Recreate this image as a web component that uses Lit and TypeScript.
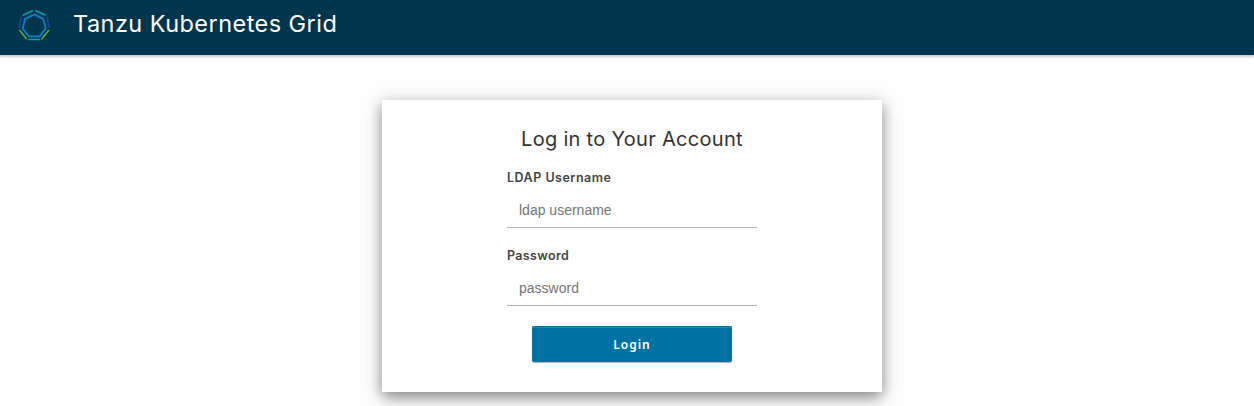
import { LitElement, html, css } from "lit";
import { customElement } from "lit/decorators.js";

@customElement("app-root")
export class AppRoot extends LitElement {
  static styles = css`
    :host { display: block; height: 406px; overflow: hidden; background: #fefefe; font-family: Inter, sans-serif; color: #333; }
    * { box-sizing: border-box; }
    .navbar { display: flex; align-items: flex-start; height: 55px; background: #00364d; box-shadow: 0 2px 2px rgba(0, 0, 0, 0.2); color: #fff; }
    .logo { display: block; width: 40px; height: 40px; margin: 5px 0 0 14px; }
    .brand { margin-left: 19px; font-size: 23.5px; line-height: 47px; letter-spacing: 0.45px; white-space: nowrap; }
    .panel { display: flex; flex-direction: column; align-items: center; width: 500px; height: 292px; margin: 45px 0 0 382px; padding-top: 24px; background: #fff; box-shadow: 0 5px 15px rgba(0, 0, 0, 0.5); }
    .heading { margin: 0; font-size: 20px; line-height: 30px; font-weight: 400; letter-spacing: 0.3px; white-space: nowrap; }
    .row { width: 250px; height: 78px; padding-top: 16px; }
    .label { display: block; height: 16px; font-size: 12.5px; line-height: 16px; font-weight: 600; letter-spacing: 0.5px; color: #444; }
    .label-short { letter-spacing: 0.35px; }
    .input { display: block; width: 250px; height: 35px; margin-top: 7px; padding: 0 12px 1px; border: 0; border-bottom: 1px solid #b3b3b3; border-radius: 0; outline: 0; background: none; font: 14px "Liberation Sans", Arial, sans-serif; color: #666; }
    .input::placeholder { color: #757575; opacity: 1; }
    .button { width: 200px; height: 36px; margin-top: 16px; padding: 0; border: 0; border-radius: 2px; background: #0072a3; box-shadow: inset 0 1px 0 #0072a3, inset 0 2px 0 rgba(255, 255, 255, 0.15), 0 1px 1px rgba(0, 0, 0, 0.3); color: #fff; font: 600 12px "Noto Sans", sans-serif; letter-spacing: 1px; }
  `;

  render() {
    return html`
      <header class="navbar">
        <svg class="logo" viewBox="14 5 40 40" fill="none" stroke-width="1.7">
          <path stroke="#0b80c8" stroke-width="1.8" d="M34.2 14.4 43.3 18.9 45.7 28.5 39.6 36.4H28.8L22.7 28.5 25.1 18.9Z" />
          <path stroke="#009eb5" d="M22.8 15.2 33 10.4M35.4 10.4 45.6 15.2M28.2 39.5H40.2" />
          <path stroke="#10488e" d="M21.4 16.8 19 28M47 16.8 49.4 28" />
          <path stroke="#60a832" d="M19.4 30 26.8 39.2M49 30 41.6 39.2" />
        </svg>
        <div class="brand">Tanzu Kubernetes Grid</div>
      </header>
      <main class="panel">
        <h2 class="heading">Log in to Your Account</h2>
        <div class="row">
          <label class="label" for="login">LDAP Username</label>
          <input class="input" id="login" type="text" placeholder="ldap username" />
        </div>
        <div class="row">
          <label class="label label-short" for="password">Password</label>
          <input class="input" id="password" type="password" placeholder="password" />
        </div>
        <button class="button" type="submit">Login</button>
      </main>
    `;
  }
}
